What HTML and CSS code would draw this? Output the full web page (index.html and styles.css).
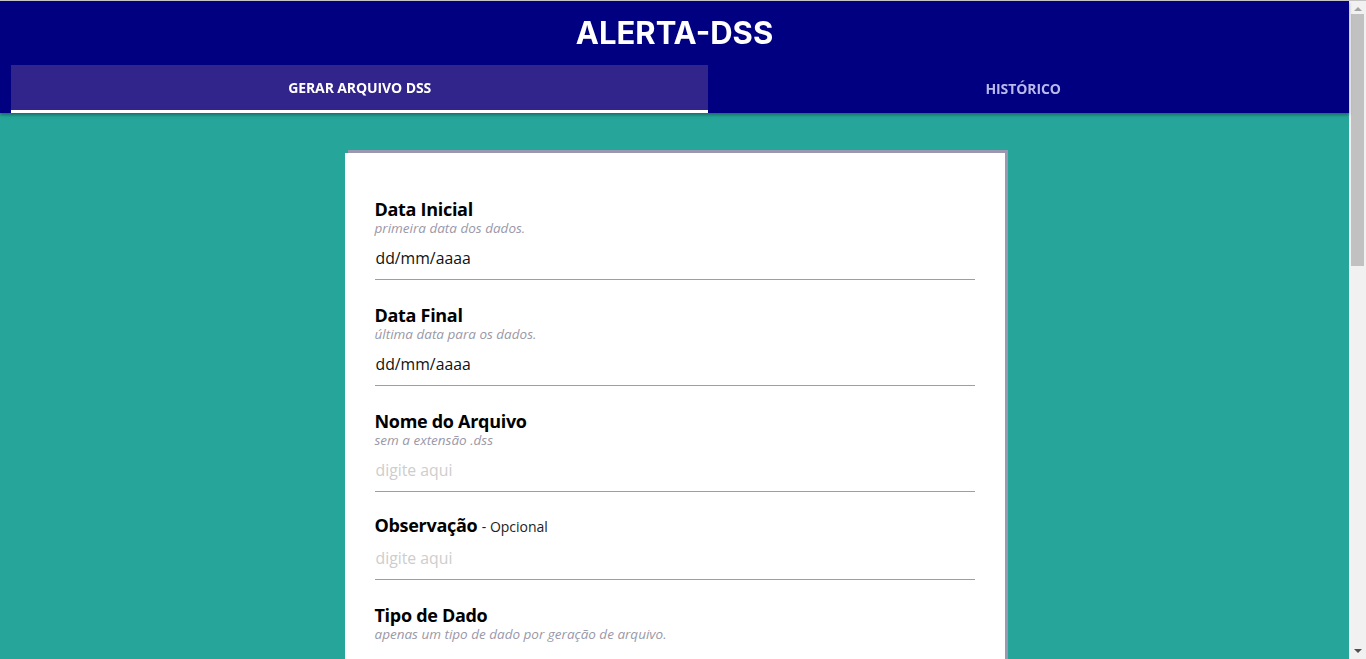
FILE: index.html
```html
<!DOCTYPE html>
<html lang="pt-BR">
<head>
<meta charset="utf-8">
<title>ALERTA-DSS</title>
<link rel="stylesheet" href="styles.css">
</head>
<body>
<div class="page">
  <header class="header">
    <h1 class="title">ALERTA-DSS</h1>
    <nav class="tabs">
      <a class="tab active">GERAR ARQUIVO DSS</a>
      <a class="tab">HISTÓRICO</a>
    </nav>
  </header>
  <main class="main">
    <form class="card">
      <div class="field">
        <label class="label">Data Inicial</label>
        <span class="hint">primeira data dos dados.</span>
        <div class="input">dd/mm/aaaa</div>
      </div>
      <div class="field">
        <label class="label">Data Final</label>
        <span class="hint">última data para os dados.</span>
        <div class="input">dd/mm/aaaa</div>
      </div>
      <div class="field">
        <label class="label">Nome do Arquivo</label>
        <span class="hint">sem a extensão .dss</span>
        <div class="input placeholder">digite aqui</div>
      </div>
      <div class="field compact">
        <label class="label">Observação <span class="opt">- Opcional</span></label>
        <div class="input placeholder">digite aqui</div>
      </div>
      <div class="field">
        <label class="label">Tipo de Dado</label>
        <span class="hint">apenas um tipo de dado por geração de arquivo.</span>
        <div class="options">
          <span class="option">Pluviometria</span>
          <span class="option">Fluviometria</span>
        </div>
      </div>
    </form>
  </main>
</div>
<div class="scrollbar">
  <span class="arrow up"></span>
  <span class="thumb"></span>
  <span class="arrow down"></span>
</div>
</body>
</html>
```

FILE: styles.css
```css
html, body {
  margin: 0;
  padding: 0;
}
body {
  background: #26a69a;
  font-family: "Open Sans", "Noto Sans", sans-serif;
  border-top: 1px solid #c4c4c4;
  overflow: hidden;
  height: 658px;
}
.page {
  margin-right: 17px;
}
.header {
  background: #000080;
  box-shadow: 0 2px 3px rgba(0, 0, 0, 0.35);
  position: relative;
  z-index: 1;
}
.title {
  margin: 0;
  height: 64px;
  line-height: 64px;
  text-align: center;
  color: #fff;
  font-family: "Inter", sans-serif;
  font-weight: 700;
  font-size: 31px;
  letter-spacing: 0;
}
.tabs {
  display: flex;
  margin: 0 11px;
  height: 48px;
}
.tab {
  flex: 1 1 auto;
  display: flex;
  align-items: center;
  justify-content: center;
  font-size: 14px;
  font-weight: 700;
  color: #b9b9ea;
  letter-spacing: -0.1px;
  box-sizing: border-box;
  padding: 0 0 2px;
}
.tab.active {
  background: #31248a;
  color: #fff;
  border-bottom: 3px solid #fff;
  padding: 0;
}
.main {
  padding-top: 40px;
}
.card {
  width: 600px;
  margin: 0 auto;
  background: #fff;
  padding: 45px 30px 30px;
  box-shadow: 3px -3px 0 #9a98b0;
  box-sizing: content-box;
}
.field {
  display: flex;
  flex-direction: column;
  margin-bottom: 24px;
}
.field.compact {
  margin-top: -2px;
}
.label {
  display: block;
  font-size: 18px;
  line-height: 22px;
  height: 22px;
  font-weight: 700;
  color: #000;
  letter-spacing: -0.3px;
}
.opt {
  font-size: 14px;
  line-height: 14px;
  font-weight: 400;
  letter-spacing: 0;
  color: #222;
}
.hint {
  font-size: 13.5px;
  line-height: 16px;
  font-style: italic;
  color: #9a98a8;
  letter-spacing: 0;
}
.input {
  margin-top: 4px;
  padding: 9px 1px 11px;
  line-height: 19px;
  font-size: 15.8px;
  color: #111;
  border-bottom: 1px solid #9e9e9e;
}
.input.placeholder {
  color: #cdcdcd;
}
.options {
  display: flex;
  gap: 30px;
  margin-top: 12px;
  font-size: 15px;
  line-height: 24px;
}
.scrollbar {
  position: fixed;
  top: 1px;
  right: 0;
  bottom: 0;
  width: 17px;
  background: #f1f1f1;
  display: flex;
  flex-direction: column;
  align-items: center;
}
.arrow {
  width: 0;
  height: 0;
  border-left: 4px solid transparent;
  border-right: 4px solid transparent;
}
.arrow.up {
  margin-top: 6px;
  border-bottom: 4px solid #a3a3a3;
}
.arrow.down {
  margin-top: auto;
  margin-bottom: 6px;
  border-top: 4px solid #505050;
}
.thumb {
  margin-top: 3px;
  width: 13px;
  height: 252px;
  background: #c1c1c1;
}
```
